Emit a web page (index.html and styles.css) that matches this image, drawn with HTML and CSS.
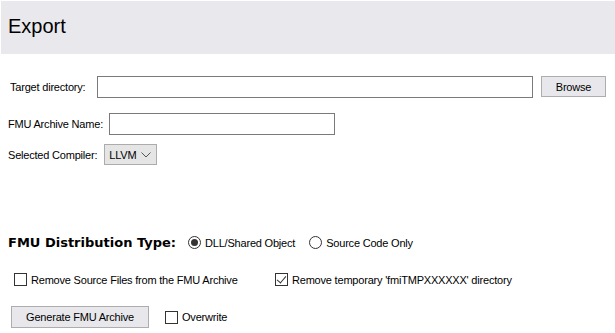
FILE: index.html
```html
<!DOCTYPE html>
<html lang="en">
<head>
  <meta charset="UTF-8" />
  <title>Export</title>
  <link rel="stylesheet" href="styles.css">
</head>
<body>

  <div class="header">
    <h1>Export</h1>
  </div>

  <div class="form">
    <!-- TARGET DIRECTORY -->
    <div class="row row-target">
      <label for="target">Target directory:</label>
      <input type="text" id="target" class="text wide" />
      <button type="button" class="btn browse">Browse</button>
    </div>

    <!-- ARCHIVE NAME -->
    <div class="row row-name">
      <label for="archive">FMU Archive Name:</label>
      <input type="text" id="archive" class="text name" />
    </div>

    <!-- COMPILER -->
    <div class="row row-compiler">
      <label for="compiler">Selected Compiler:</label>
      <div class="select" id="compiler">
        <span>LLVM</span>
        <svg width="10" height="6" viewBox="0 0 10 6"><path d="M0.5 0.5 L5 5 L9.5 0.5" fill="none" stroke="#555" stroke-width="1"/></svg>
      </div>
    </div>

    <!-- DISTRIBUTION TYPE -->
    <div class="row row-dist">
      <span class="dist-title">FMU Distribution Type:</span>
      <label class="opt"><input type="radio" name="dist" checked /> DLL/Shared Object</label>
      <label class="opt"><input type="radio" name="dist" /> Source Code Only</label>
    </div>

    <!-- OPTIONS -->
    <div class="row row-opts">
      <label class="opt opt-src"><input type="checkbox" /> Remove Source Files from the FMU Archive</label>
      <label class="opt"><input type="checkbox" checked /> Remove temporary 'fmiTMPXXXXXX' directory</label>
    </div>

    <!-- GENERATE -->
    <div class="row row-gen">
      <button type="button" class="btn generate">Generate FMU Archive</button>
      <label class="opt"><input type="checkbox" /> Overwrite</label>
    </div>
  </div>

</body>
</html>
```

FILE: styles.css
```css
body {
  margin: 0;
  font-family: "Liberation Sans", Arial, sans-serif;
  font-size: 11px;
  letter-spacing: -0.2px;
  color: #000;
  background: white;
}

.header {
  background: #e9e8ed;
  margin: 1px 0 0 1px;
  height: 53px;
  display: flex;
  align-items: center;
  padding-left: 7px;
}

h1 {
  margin: 0;
  font-size: 20px;
  font-weight: normal;
  letter-spacing: normal;
  padding-bottom: 2px;
}

.form {
  padding: 0 9px 0 8px;
}

.row {
  display: flex;
  align-items: center;
}

.row-target {
  margin-top: 22px;
  padding-left: 2px;
}

.row-target label {
  margin-right: 12px;
}

.text {
  height: 22px;
  box-sizing: border-box;
  border: 1px solid #7a7a7a;
  background: white;
  margin: 0;
  padding: 2px 4px;
}

.wide {
  flex: 1;
}

.btn {
  font-family: inherit;
  font-size: 11px;
  letter-spacing: -0.2px;
  background: #e8e8ec;
  border: 1px solid #adadad;
  margin: 0;
  padding: 0;
  height: 21px;
  box-sizing: border-box;
}

.browse {
  width: 65px;
  margin-left: 8px;
  align-self: flex-start;
}

.row-name {
  margin-top: 15px;
}

.row-name label {
  margin-right: 6px;
}

.name {
  width: 226px;
}

.row-compiler {
  margin-top: 9px;
}

.row-compiler label {
  margin-right: 7px;
}

.select {
  width: 53px;
  height: 21px;
  box-sizing: border-box;
  border: 1px solid #acacac;
  background: #e5e5e5;
  display: flex;
  align-items: center;
  justify-content: space-between;
  padding: 0 5px 0 4px;
}

.row-dist {
  margin-top: 70px;
}

.dist-title {
  font-family: "DejaVu Sans", Verdana, sans-serif;
  font-weight: bold;
  font-size: 13px;
  letter-spacing: normal;
  margin-right: 12px;
}

.opt {
  display: flex;
  align-items: center;
  margin-right: 14px;
}

.opt input {
  appearance: none;
  -webkit-appearance: none;
  width: 13px;
  height: 13px;
  margin: 0 4px 0 0;
  border: 1px solid #333;
  background: white;
  box-sizing: border-box;
  position: relative;
}

.opt input[type="radio"] {
  border-radius: 50%;
}

.opt input[type="radio"]:checked::after {
  content: "";
  position: absolute;
  left: 2px;
  top: 2px;
  width: 7px;
  height: 7px;
  border-radius: 50%;
  background: #333;
}

.opt input[type="checkbox"]:checked::after {
  content: "";
  position: absolute;
  left: 3px;
  top: 0px;
  width: 4px;
  height: 8px;
  border: solid #333;
  border-width: 0 1px 1px 0;
  transform: rotate(40deg);
}

.row-opts {
  margin-top: 23px;
  padding-left: 6px;
}

.opt-src {
  width: 261px;
  margin-right: 0;
}

.row-gen {
  margin-top: 20px;
  padding-left: 3px;
}

.generate {
  width: 138px;
  height: 22px;
  margin-right: 16px;
}
```
